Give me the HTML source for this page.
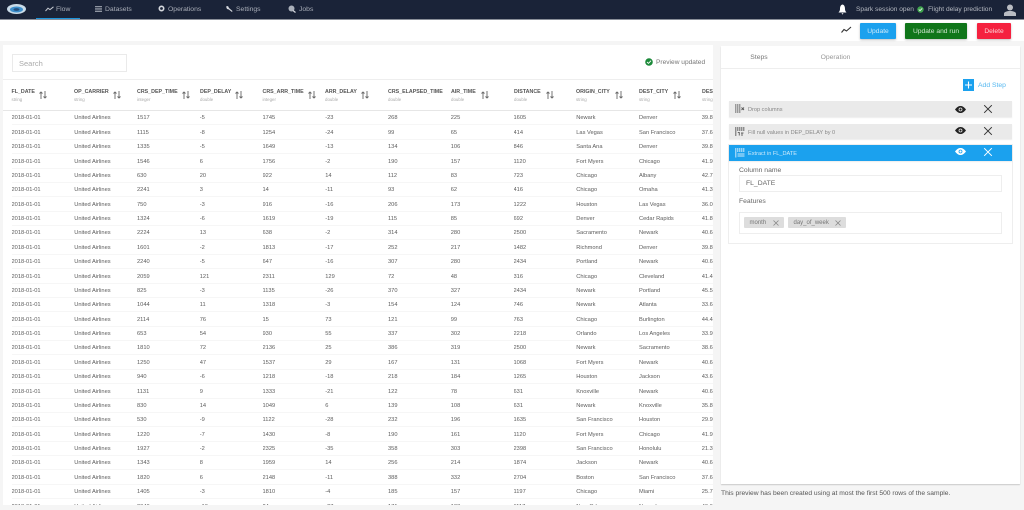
<!DOCTYPE html>
<html><head><meta charset="utf-8"><style>
html,body{margin:0;padding:0;width:1024px;height:510px;overflow:hidden;background:#f5f5f5;font-family:"Liberation Sans",sans-serif;color:#555}
.a{position:absolute;white-space:nowrap}
#top{left:0;top:0;width:1024px;height:19px;background:#1a2338;border-bottom:1px solid #8a8f99}
.n{top:6.3px;font-size:6.8px;line-height:8px;color:#a9aeb8;filter:blur(.2px)}
#band{left:0;top:20px;width:1024px;height:21px;background:#fff}
.btn{top:23px;height:16px;line-height:17px;text-align:center;font-size:6.7px;border-radius:1px;box-shadow:0 1px 2px rgba(0,0,0,.25);filter:blur(.2px)}
#left{left:3px;top:45px;width:710px;height:460px;background:#fff;overflow:hidden;filter:blur(.25px)}
table{position:absolute;left:0;top:66.4px;border-collapse:collapse;table-layout:fixed;width:710px}
td{font-size:5.7px;line-height:14.37px;height:14.37px;padding:0;white-space:nowrap;overflow:hidden;color:#5c5c5c;border-bottom:0}
tr{background:linear-gradient(#fff 13.3px,#eee 13.3px)}
col{width:62.75px}
.h{top:43.5px;font-size:5.3px;font-weight:bold;color:#555;line-height:7px}
.t{top:52px;font-size:4.4px;color:#aaa;line-height:6px}
#right{left:721px;top:46px;width:299px;height:438px;background:#fff;box-shadow:0 1px 1px rgba(0,0,0,.18);filter:blur(.2px)}
.step{left:8px;width:283px;height:16px;background:#eaeaea;box-shadow:0 1px 1px rgba(0,0,0,.08);font-size:5.6px;line-height:18px;color:#888}
.step span{position:absolute;left:19px;top:0}
.chip{top:171px;height:11px;line-height:13px;background:#ddd;font-size:6px;color:#777;border-radius:1px}
svg{position:absolute;overflow:visible}
</style></head><body>
<div class="a" id="top"></div>
<svg style="left:7px;top:3px" width="20" height="12" viewBox="0 0 20 12"><ellipse cx="9.5" cy="6" rx="9.5" ry="5" fill="#c9dbe8"/><ellipse cx="9.5" cy="6.5" rx="6.5" ry="3" fill="#3d8fcc"/><ellipse cx="9.5" cy="6.5" rx="3" ry="1.4" fill="#24507f"/></svg>
<svg style="left:45px;top:6px" width="9" height="6" viewBox="0 0 9 6"><path d="M.5 5 3 2.2 5 3.6 8.5.8" fill="none" stroke="#c4c8d0" stroke-width="1"/></svg>
<div class="a n" style="left:56px">Flow</div>
<div class="a" style="left:36px;top:18px;width:44px;height:1px;background:#1c94dc"></div>
<svg style="left:95px;top:5.5px" width="7" height="6" viewBox="0 0 7 6"><path d="M0 .5h7M0 2.2h7M0 3.9h7M0 5.5h7" stroke="#9096a2" stroke-width="1"/></svg>
<div class="a n" style="left:105px">Datasets</div>
<svg style="left:158px;top:5px" width="7" height="7" viewBox="0 0 7 7"><circle cx="3.5" cy="3.5" r="2.2" fill="none" stroke="#d5d8de" stroke-width="1.6"/></svg>
<div class="a n" style="left:168px">Operations</div>
<svg style="left:225px;top:4.5px" width="8" height="8" viewBox="0 0 8 8"><path d="M1 1.5 3 1l1 2 3.5 3L7 7 3.8 4.5 2 4z" fill="#d5d8de"/></svg>
<div class="a n" style="left:236px">Settings</div>
<svg style="left:288px;top:4.5px" width="8" height="8" viewBox="0 0 8 8"><circle cx="3.5" cy="3.5" r="3" fill="#aab0ba"/><path d="M5 5.5 7.5 7.5" stroke="#d5d8de" stroke-width="1.2"/></svg>
<div class="a n" style="left:299px">Jobs</div>
<svg style="left:838px;top:4px" width="9" height="11" viewBox="0 0 9 11"><path d="M4.5 0.5C2.4 1 2 3 2 5c0 2-1 2.800-1.500 3.500h8C8 7.800 7 7 7 5c0-2-.4-4-2.500-4.500zM3.500 9.300h2L4.500 10.600z" fill="#fff"/></svg>
<div class="a n" style="left:856px;font-size:6.6px;color:#b4b8c0">Spark session open</div>
<svg style="left:917px;top:6px" width="7" height="7" viewBox="0 0 7 7"><circle cx="3.500" cy="3.500" r="3.200" fill="#3fa34d"/><path d="M1.800 3.500 3 4.700 5.200 2.400" fill="none" stroke="#fff" stroke-width=".8"/></svg>
<div class="a n" style="left:928px;font-size:6.6px;color:#b4b8c0">Flight delay prediction</div>
<svg style="left:1004px;top:4px" width="12" height="12" viewBox="0 0 12 12"><circle cx="6" cy="3.500" r="3" fill="#b9bcc2"/><path d="M0 12V9.500C0 8 3 7 6 7s6 1 6 2.500V12z" fill="#b9bcc2"/></svg>

<div class="a" id="band"></div>
<svg style="left:841px;top:26px" width="11" height="8" viewBox="0 0 11 8"><path d="M.5 6.500 3 3.500 5.500 5 10 1" fill="none" stroke="#333" stroke-width="1.100"/></svg>
<div class="a btn" style="left:860px;width:36px;background:#1ba1ee;color:#cfeafa">Update</div>
<div class="a btn" style="left:905px;width:62px;background:#10761a;color:#cfe5d0">Update and run</div>
<div class="a btn" style="left:977px;width:34px;background:#f5213f;color:#fcd5da">Delete</div>

<div class="a" id="left">
 <div class="a" style="left:9px;top:9px;width:113px;height:16px;border:1px solid #eaeaea;font-size:7.500px;line-height:17px;color:#aaa;text-indent:6px">Search</div>
 <svg style="left:642px;top:13px" width="8" height="8" viewBox="0 0 8 8"><circle cx="4" cy="4" r="3.800" fill="#1c8a3a"/><path d="M2 4 3.500 5.400 6 2.700" fill="none" stroke="#fff" stroke-width=".9"/></svg>
 <div class="a" style="left:653px;top:13.5px;font-size:6.600px;line-height:8px;color:#777">Preview updated</div>
 <div class="a" style="left:0;top:34px;width:710px;height:1px;background:#eee"></div>
 <div class="a" style="left:0;top:65px;width:710px;height:1px;background:#e6e6e6"></div>

 <div class="a h" style="left:8.500px">FL_DATE</div><div class="a t" style="left:8.500px">string</div>
 <div class="a h" style="left:71px">OP_CARRIER</div><div class="a t" style="left:71px">string</div>
 <div class="a h" style="left:134px">CRS_DEP_TIME</div><div class="a t" style="left:134px">integer</div>
 <div class="a h" style="left:197px">DEP_DELAY</div><div class="a t" style="left:197px">double</div>
 <div class="a h" style="left:259.500px">CRS_ARR_TIME</div><div class="a t" style="left:259.500px">integer</div>
 <div class="a h" style="left:322px">ARR_DELAY</div><div class="a t" style="left:322px">double</div>
 <div class="a h" style="left:385px">CRS_ELAPSED_TIME</div><div class="a t" style="left:385px">double</div>
 <div class="a h" style="left:448px">AIR_TIME</div><div class="a t" style="left:448px">double</div>
 <div class="a h" style="left:511px">DISTANCE</div><div class="a t" style="left:511px">double</div>
 <div class="a h" style="left:573px">ORIGIN_CITY</div><div class="a t" style="left:573px">string</div>
 <div class="a h" style="left:636px">DEST_CITY</div><div class="a t" style="left:636px">string</div>
 <div class="a h" style="left:699px">DEST_LAT</div><div class="a t" style="left:699px">string</div>

 <svg style="left:36px;top:46px" width="8" height="8" viewBox="0 0 8 8"><path d="M2 8V1M.5 2.500 2 1l1.500 1.500M6 0v7M4.500 5.500 6 7l1.500-1.500" fill="none" stroke="#666" stroke-width=".9"/></svg>
 <svg style="left:110px;top:46px" width="8" height="8" viewBox="0 0 8 8"><path d="M2 8V1M.5 2.500 2 1l1.500 1.500M6 0v7M4.500 5.500 6 7l1.500-1.500" fill="none" stroke="#666" stroke-width=".9"/></svg>
 <svg style="left:179px;top:46px" width="8" height="8" viewBox="0 0 8 8"><path d="M2 8V1M.5 2.500 2 1l1.500 1.500M6 0v7M4.500 5.500 6 7l1.500-1.500" fill="none" stroke="#666" stroke-width=".9"/></svg>
 <svg style="left:232px;top:46px" width="8" height="8" viewBox="0 0 8 8"><path d="M2 8V1M.5 2.500 2 1l1.500 1.500M6 0v7M4.500 5.500 6 7l1.500-1.500" fill="none" stroke="#666" stroke-width=".9"/></svg>
 <svg style="left:305px;top:46px" width="8" height="8" viewBox="0 0 8 8"><path d="M2 8V1M.5 2.500 2 1l1.500 1.500M6 0v7M4.500 5.500 6 7l1.500-1.500" fill="none" stroke="#666" stroke-width=".9"/></svg>
 <svg style="left:358px;top:46px" width="8" height="8" viewBox="0 0 8 8"><path d="M2 8V1M.5 2.500 2 1l1.500 1.500M6 0v7M4.500 5.500 6 7l1.500-1.500" fill="none" stroke="#666" stroke-width=".9"/></svg>
 <svg style="left:478px;top:46px" width="8" height="8" viewBox="0 0 8 8"><path d="M2 8V1M.5 2.500 2 1l1.500 1.500M6 0v7M4.500 5.500 6 7l1.500-1.500" fill="none" stroke="#666" stroke-width=".9"/></svg>
 <svg style="left:543px;top:46px" width="8" height="8" viewBox="0 0 8 8"><path d="M2 8V1M.5 2.500 2 1l1.500 1.500M6 0v7M4.500 5.500 6 7l1.500-1.500" fill="none" stroke="#666" stroke-width=".9"/></svg>
 <svg style="left:612px;top:46px" width="8" height="8" viewBox="0 0 8 8"><path d="M2 8V1M.5 2.500 2 1l1.500 1.500M6 0v7M4.500 5.500 6 7l1.500-1.500" fill="none" stroke="#666" stroke-width=".9"/></svg>
 <svg style="left:670px;top:46px" width="8" height="8" viewBox="0 0 8 8"><path d="M2 8V1M.5 2.500 2 1l1.500 1.500M6 0v7M4.500 5.500 6 7l1.500-1.500" fill="none" stroke="#666" stroke-width=".9"/></svg>

 <table style="left:8.500px;width:753px">
 <colgroup><col><col><col><col><col><col><col><col><col><col><col><col></colgroup>
 <tr><td>2018-01-01</td><td>United Airlines</td><td>1517</td><td>-5</td><td>1745</td><td>-23</td><td>268</td><td>225</td><td>1605</td><td>Newark</td><td>Denver</td><td>39.8</td></tr>
 <tr><td>2018-01-01</td><td>United Airlines</td><td>1115</td><td>-8</td><td>1254</td><td>-24</td><td>99</td><td>65</td><td>414</td><td>Las Vegas</td><td>San Francisco</td><td>37.6</td></tr>
 <tr><td>2018-01-01</td><td>United Airlines</td><td>1335</td><td>-5</td><td>1649</td><td>-13</td><td>134</td><td>106</td><td>846</td><td>Santa Ana</td><td>Denver</td><td>39.8</td></tr>
 <tr><td>2018-01-01</td><td>United Airlines</td><td>1546</td><td>6</td><td>1756</td><td>-2</td><td>190</td><td>157</td><td>1120</td><td>Fort Myers</td><td>Chicago</td><td>41.9</td></tr>
 <tr><td>2018-01-01</td><td>United Airlines</td><td>630</td><td>20</td><td>922</td><td>14</td><td>112</td><td>83</td><td>723</td><td>Chicago</td><td>Albany</td><td>42.7</td></tr>
 <tr><td>2018-01-01</td><td>United Airlines</td><td>2241</td><td>3</td><td>14</td><td>-11</td><td>93</td><td>62</td><td>416</td><td>Chicago</td><td>Omaha</td><td>41.3</td></tr>
 <tr><td>2018-01-01</td><td>United Airlines</td><td>750</td><td>-3</td><td>916</td><td>-16</td><td>206</td><td>173</td><td>1222</td><td>Houston</td><td>Las Vegas</td><td>36.0</td></tr>
 <tr><td>2018-01-01</td><td>United Airlines</td><td>1324</td><td>-6</td><td>1619</td><td>-19</td><td>115</td><td>85</td><td>692</td><td>Denver</td><td>Cedar Rapids</td><td>41.8</td></tr>
 <tr><td>2018-01-01</td><td>United Airlines</td><td>2224</td><td>13</td><td>638</td><td>-2</td><td>314</td><td>280</td><td>2500</td><td>Sacramento</td><td>Newark</td><td>40.6</td></tr>
 <tr><td>2018-01-01</td><td>United Airlines</td><td>1601</td><td>-2</td><td>1813</td><td>-17</td><td>252</td><td>217</td><td>1482</td><td>Richmond</td><td>Denver</td><td>39.8</td></tr>
 <tr><td>2018-01-01</td><td>United Airlines</td><td>2240</td><td>-5</td><td>647</td><td>-16</td><td>307</td><td>280</td><td>2434</td><td>Portland</td><td>Newark</td><td>40.6</td></tr>
 <tr><td>2018-01-01</td><td>United Airlines</td><td>2059</td><td>121</td><td>2311</td><td>129</td><td>72</td><td>48</td><td>316</td><td>Chicago</td><td>Cleveland</td><td>41.4</td></tr>
 <tr><td>2018-01-01</td><td>United Airlines</td><td>825</td><td>-3</td><td>1135</td><td>-26</td><td>370</td><td>327</td><td>2434</td><td>Newark</td><td>Portland</td><td>45.5</td></tr>
 <tr><td>2018-01-01</td><td>United Airlines</td><td>1044</td><td>11</td><td>1318</td><td>-3</td><td>154</td><td>124</td><td>746</td><td>Newark</td><td>Atlanta</td><td>33.6</td></tr>
 <tr><td>2018-01-01</td><td>United Airlines</td><td>2114</td><td>76</td><td>15</td><td>73</td><td>121</td><td>99</td><td>763</td><td>Chicago</td><td>Burlington</td><td>44.4</td></tr>
 <tr><td>2018-01-01</td><td>United Airlines</td><td>653</td><td>54</td><td>930</td><td>55</td><td>337</td><td>302</td><td>2218</td><td>Orlando</td><td>Los Angeles</td><td>33.9</td></tr>
 <tr><td>2018-01-01</td><td>United Airlines</td><td>1810</td><td>72</td><td>2136</td><td>25</td><td>386</td><td>319</td><td>2500</td><td>Newark</td><td>Sacramento</td><td>38.6</td></tr>
 <tr><td>2018-01-01</td><td>United Airlines</td><td>1250</td><td>47</td><td>1537</td><td>29</td><td>167</td><td>131</td><td>1068</td><td>Fort Myers</td><td>Newark</td><td>40.6</td></tr>
 <tr><td>2018-01-01</td><td>United Airlines</td><td>940</td><td>-6</td><td>1218</td><td>-18</td><td>218</td><td>184</td><td>1265</td><td>Houston</td><td>Jackson</td><td>43.6</td></tr>
 <tr><td>2018-01-01</td><td>United Airlines</td><td>1131</td><td>9</td><td>1333</td><td>-21</td><td>122</td><td>78</td><td>631</td><td>Knoxville</td><td>Newark</td><td>40.6</td></tr>
 <tr><td>2018-01-01</td><td>United Airlines</td><td>830</td><td>14</td><td>1049</td><td>6</td><td>139</td><td>108</td><td>631</td><td>Newark</td><td>Knoxville</td><td>35.8</td></tr>
 <tr><td>2018-01-01</td><td>United Airlines</td><td>530</td><td>-9</td><td>1122</td><td>-28</td><td>232</td><td>196</td><td>1635</td><td>San Francisco</td><td>Houston</td><td>29.9</td></tr>
 <tr><td>2018-01-01</td><td>United Airlines</td><td>1220</td><td>-7</td><td>1430</td><td>-8</td><td>190</td><td>161</td><td>1120</td><td>Fort Myers</td><td>Chicago</td><td>41.9</td></tr>
 <tr><td>2018-01-01</td><td>United Airlines</td><td>1927</td><td>-2</td><td>2325</td><td>-35</td><td>358</td><td>303</td><td>2398</td><td>San Francisco</td><td>Honolulu</td><td>21.3</td></tr>
 <tr><td>2018-01-01</td><td>United Airlines</td><td>1343</td><td>8</td><td>1959</td><td>14</td><td>256</td><td>214</td><td>1874</td><td>Jackson</td><td>Newark</td><td>40.6</td></tr>
 <tr><td>2018-01-01</td><td>United Airlines</td><td>1820</td><td>6</td><td>2148</td><td>-11</td><td>388</td><td>332</td><td>2704</td><td>Boston</td><td>San Francisco</td><td>37.6</td></tr>
 <tr><td>2018-01-01</td><td>United Airlines</td><td>1405</td><td>-3</td><td>1810</td><td>-4</td><td>185</td><td>157</td><td>1197</td><td>Chicago</td><td>Miami</td><td>25.7</td></tr>
 <tr><td>2018-01-01</td><td>United Airlines</td><td>2040</td><td>-10</td><td>24</td><td>-27</td><td>171</td><td>133</td><td>1117</td><td>New Orleans</td><td>Newark</td><td>40.6</td></tr>
 </table>
</div>

<div class="a" id="right">
 <div class="a" style="left:0;top:0;width:76px;height:22px;line-height:24px;text-align:center;font-size:6.800px;color:#777;border-bottom:1px solid #1ba1ee">Steps</div>
 <div class="a" style="left:76px;top:0;width:77px;height:22px;line-height:24px;text-align:center;font-size:6.800px;color:#999">Operation</div>
 <div class="a" style="left:0;top:22px;width:299px;height:1px;background:#eee"></div>
 <div class="a" style="left:242px;top:33px;width:11px;height:12px;background:#1ba1ee"></div>
 <svg style="left:242px;top:33px" width="11" height="12" viewBox="0 0 11 12"><path d="M5.500 2.500v7M2 6h7" stroke="#fff" stroke-width="1.100"/></svg>
 <div class="a" style="left:257px;top:35px;font-size:6.800px;line-height:9px;color:#56b8f0">Add Step</div>

 <div class="a step" style="top:55px"><span>Drop columns</span>
  <svg style="left:6px;top:3px" width="10" height="10" viewBox="0 0 10 10"><path d="M.8 0v9M2.800 0v9M4.800 0v9" stroke="#777" stroke-width="1"/><path d="M6.500 3.500 9 6M9 3.500 6.500 6" stroke="#555" stroke-width=".9"/></svg>
  <svg style="left:226px;top:4.500px" width="11" height="7" viewBox="0 0 11 7"><path d="M0 3.500C2 .8 3.800 0 5.500 0S9 .8 11 3.500C9 6.200 7.200 7 5.500 7S2 6.200 0 3.500z" fill="#222"/><circle cx="5.500" cy="3.500" r="1.900" fill="#eaeaea"/><circle cx="5.500" cy="3.500" r="1.100" fill="#222"/></svg>
  <svg style="left:254.500px;top:4px" width="8" height="8" viewBox="0 0 8 8"><path d="M.2.200 7.800 7.800M7.800.2.200 7.800" stroke="#333" stroke-width="1"/></svg>
 </div>
 <div class="a step" style="top:78px;height:15px"><span>Fill null values in DEP_DELAY by 0</span>
  <svg style="left:6px;top:3px" width="10" height="10" viewBox="0 0 10 10"><path d="M.8 0v9M2.800 0v4M4.800 0v4M6.800 0v4M8.800 0v4M2.800 5.500h1.500v3M6 6h2.500M7 6v3" stroke="#666" stroke-width="1" fill="none"/></svg>
  <svg style="left:226px;top:3px" width="11" height="7" viewBox="0 0 11 7"><path d="M0 3.500C2 .8 3.800 0 5.500 0S9 .8 11 3.500C9 6.200 7.200 7 5.500 7S2 6.200 0 3.500z" fill="#222"/><circle cx="5.500" cy="3.500" r="1.900" fill="#eaeaea"/><circle cx="5.500" cy="3.500" r="1.100" fill="#222"/></svg>
  <svg style="left:254.500px;top:2.500px" width="8" height="8" viewBox="0 0 8 8"><path d="M.2.200 7.800 7.800M7.800.2.200 7.800" stroke="#333" stroke-width="1"/></svg>
 </div>
 <div class="a" style="left:8px;top:99px;width:283px;height:98px;box-shadow:0 0 0 1px #eee"></div>
 <div class="a step" style="top:99px;background:#1ba1ee;color:#cfeafa"><span>Extract in FL_DATE</span>
  <svg style="left:6px;top:3px" width="10" height="10" viewBox="0 0 10 10"><path d="M.8 0v9.500M2.800 0v4M4.800 0v4M6.800 0v4M8.800 0v4M2.500 6h7M2.500 8h7" stroke="#cfeafa" stroke-width="1" fill="none"/></svg>
  <svg style="left:226px;top:3px" width="11" height="7" viewBox="0 0 11 7"><path d="M0 3.500C2 .8 3.800 0 5.500 0S9 .8 11 3.500C9 6.200 7.200 7 5.500 7S2 6.200 0 3.500z" fill="#fff"/><circle cx="5.500" cy="3.500" r="1.900" fill="#1ba1ee"/><circle cx="5.500" cy="3.500" r="1.100" fill="#fff"/></svg>
  <svg style="left:254.500px;top:2.500px" width="8" height="8" viewBox="0 0 8 8"><path d="M.2.200 7.800 7.800M7.800.2.200 7.800" stroke="#fff" stroke-width="1"/></svg>
 </div>
 <div class="a" style="left:18px;top:120.500px;font-size:6.800px;line-height:8px;color:#666">Column name</div>
 <div class="a" style="left:18px;top:129px;width:261px;height:15px;border:1px solid #eee;font-size:6.800px;line-height:16px;color:#666;text-indent:6px">FL_DATE</div>
 <div class="a" style="left:18px;top:152px;font-size:6.800px;line-height:8px;color:#666">Features</div>
 <div class="a" style="left:18px;top:166px;width:261px;height:20px;border:1px solid #eee"></div>
 <div class="a chip" style="left:23px;width:40px;text-indent:5.500px">month</div>
 <svg style="left:52px;top:173.500px" width="6" height="6" viewBox="0 0 6 6"><path d="M.5.500 5.500 5.500M5.500.500.500 5.500" stroke="#888" stroke-width=".8"/></svg>
 <div class="a chip" style="left:67px;width:58px;text-indent:5.500px">day_of_week</div>
 <svg style="left:114px;top:173.500px" width="6" height="6" viewBox="0 0 6 6"><path d="M.5.500 5.500 5.500M5.500.500.500 5.500" stroke="#888" stroke-width=".8"/></svg>
</div>
<div class="a" style="left:721px;top:489px;font-size:6.700px;line-height:9px;color:#555">This preview has been created using at most the first 500 rows of the sample.</div>
</body></html>
